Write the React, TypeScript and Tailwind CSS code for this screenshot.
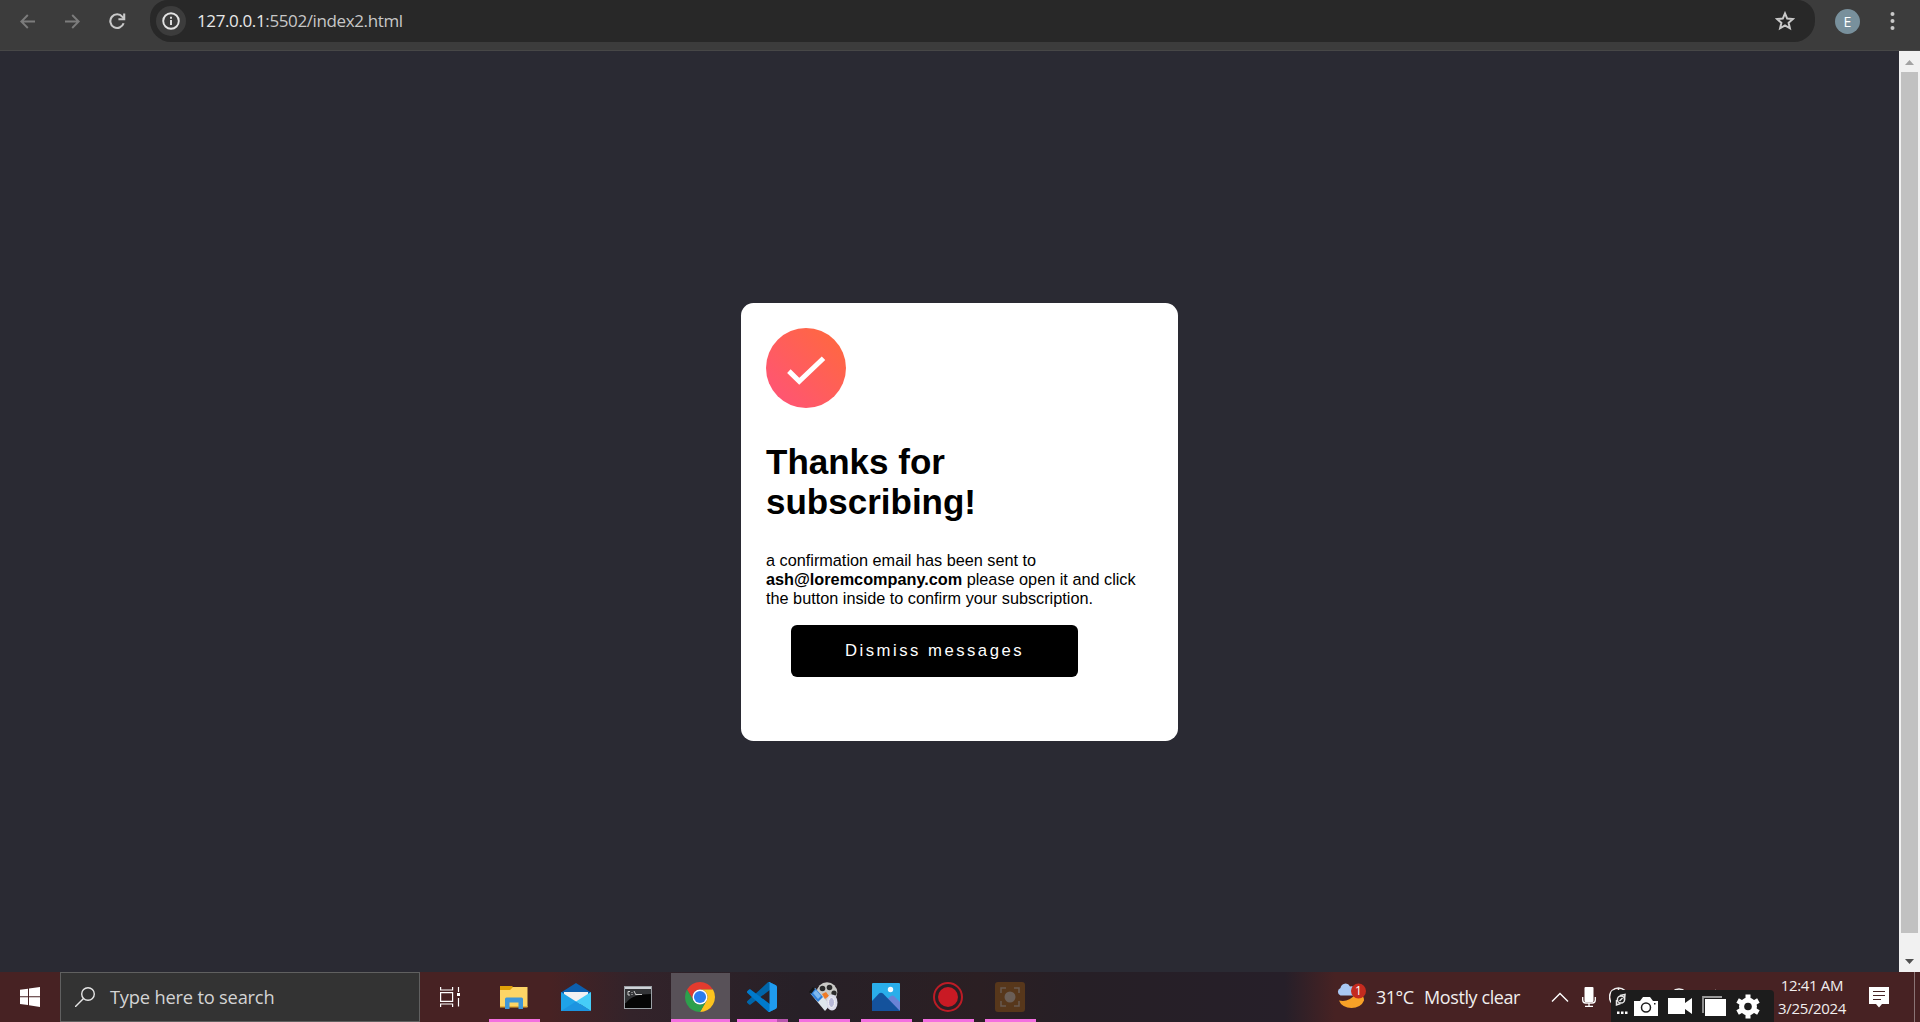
import React from "react";

const ui = "font-['Open_Sans','Noto_Sans',sans-serif]";

function BrowserBar() {
  return (
    <header className="flex h-[51px] shrink-0 items-start border-b border-[#474747] bg-[#3c3c3c]">
      <div className="flex h-[42px] w-[150px] shrink-0 items-center">
        <svg className="ml-[20px]" width="15" height="15" viewBox="0 0 15 15" fill="none" stroke="#7c7c7c" strokeWidth="1.9">
          <path d="M15 7.5H1.5M7.8 1 1.3 7.5l6.5 6.5" />
        </svg>
        <svg className="ml-[30px]" width="15" height="15" viewBox="0 0 15 15" fill="none" stroke="#7c7c7c" strokeWidth="1.9">
          <path d="M0 7.5h13.5M7.2 1l6.5 6.5L7.2 14" />
        </svg>
        <svg className="ml-[29px]" width="17" height="17" viewBox="0 0 17 17" fill="none" stroke="#c9c9c9" strokeWidth="2.1">
          <path d="M14.6 10.2A6.8 6.8 0 1 1 13.4 3.8L15 5.6" />
          <path d="M15.2 .6V6.3H9.4" />
        </svg>
      </div>
      <div className="flex h-[42px] w-[1665px] items-center rounded-b-[21px] rounded-tl-[18px] rounded-tr-[18px] bg-[#282828] pl-[6px] pr-[20px]">
        <span className="flex size-[30px] items-center justify-center rounded-full bg-[#3c3c3c]">
          <svg width="18" height="18" viewBox="0 0 18 18" fill="none" stroke="#e3e3e3" strokeWidth="1.9">
            <circle cx="9" cy="9" r="7.8" />
            <path d="M9 8v5M9 4.7v2" />
          </svg>
        </span>
        <span className={`${ui} ml-[11px] flex-1 text-[17px] leading-[42px] tracking-[-0.38px] text-[#c7c7c7]`}>
          <span className="text-[#e8e8e8]">127.0.0.1</span>:5502/index2.html
        </span>
        <svg width="20" height="20" viewBox="0 0 20 20" fill="none" stroke="#c9c9c9" strokeWidth="2">
          <path d="M10 2.400l2.200 5.200 5.700.500-4.300 3.700 1.300 5.500L10 14.400l-4.900 2.900 1.300-5.500L2.100 8.100l5.700-.500z" />
        </svg>
      </div>
      <div className="flex h-[42px] items-center">
        <span className={`${ui} ml-[20px] flex size-[25px] items-center justify-center rounded-full bg-[#78909c] text-[14px] text-white`}>E</span>
        <svg className="ml-[30px]" width="5" height="18" viewBox="0 0 5 18" fill="#c9c9c9">
          <circle cx="2.5" cy="2" r="2" />
          <circle cx="2.5" cy="9" r="2" />
          <circle cx="2.5" cy="16" r="2" />
        </svg>
      </div>
    </header>
  );
}

function SuccessCard() {
  return (
    <section className="h-[438px] w-[437px] rounded-[12.5px] bg-white p-[25px] font-['Liberation_Sans',Arial,sans-serif] text-black">
      <svg width="80" height="80" viewBox="0 0 64 64">
        <defs>
          <linearGradient id="check" x1="100%" x2="0%" y1="0%" y2="100%">
            <stop offset="0%" stopColor="#FF6A3A" />
            <stop offset="100%" stopColor="#FF527B" />
          </linearGradient>
        </defs>
        <circle cx="32" cy="32" r="32" fill="url(#check)" />
        <path d="M18.300 34.500l8.300 8.100L46 24.200" fill="none" stroke="#fff" strokeWidth="4" />
      </svg>
      <h1 className="mt-[34px] w-[260px] text-[35px] font-bold leading-[40px]">Thanks for subscribing!</h1>
      <p className="mt-[29px] whitespace-nowrap text-[16.25px] leading-[19px]">
        a confirmation email has been sent to
        <br />
        <b>ash@loremcompany.com</b> please open it and click
        <br />
        the button inside to confirm your subscription.
      </p>
      <button className="ml-[25px] mt-[17px] block h-[52px] w-[287px] rounded-[6px] bg-black text-[16.7px] tracking-[2.5px] text-white">
        Dismiss messages
      </button>
    </section>
  );
}

function Scrollbar() {
  return (
    <div className="flex w-[21px] shrink-0 flex-col items-center bg-[#f1f1f1]">
      <svg width="21" height="21" viewBox="0 0 21 21">
        <path d="M6 14l4.500-5 4.500 5z" fill="#a3a3a3" />
      </svg>
      <div className="h-[861px] w-[17px] bg-[#c1c1c1]" />
      <svg className="mt-[18px]" width="21" height="21" viewBox="0 0 21 21">
        <path d="M6 8l4.500 5 4.500-5z" fill="#505050" />
      </svg>
    </div>
  );
}

type TaskProps = { children?: React.ReactNode; open?: boolean; active?: boolean; stacked?: boolean };

function TaskButton({ children, open = true, active = false, stacked = false }: TaskProps) {
  return (
    <div className="flex w-[62px] justify-center">
      <div className={active ? "mt-px flex h-[49px] w-[59px] flex-col items-center bg-[#585158]" : "mt-px flex h-[49px] w-[51px] flex-col items-center"}>
        <div className="flex h-[46px] items-center justify-center pt-[2px]">{children}</div>
        {open && (
          <div className="flex h-[3px] w-full">
            <div className="flex-1 bg-[#f36fe0]" />
            {stacked && <div className="w-[11px] bg-[#b956ae]" />}
          </div>
        )}
      </div>
    </div>
  );
}

function Folder() {
  return (
    <svg width="28" height="24" viewBox="0 0 28 24">
      <path d="M0 1h12l2 2h13v5H0z" fill="#e0a008" />
      <path d="M0 5h10l3-3h14.500v20H0z" fill="#fdd566" />
      <path d="M0 21h27.500v1.500H0z" fill="#e8b23a" />
      <path d="M5 24V14q0-1.500 1.500-1.500h15q1.500 0 1.500 1.500v10h-4.500v-6.500h-9V24z" fill="#3f97d8" />
    </svg>
  );
}

function Mail() {
  return (
    <svg width="30" height="28" viewBox="0 0 30 28">
      <path d="M0 9.500L15 0l15 9.500V14H0z" fill="#0c5fae" />
      <path d="M3 9h24v7l-12 8L3 16z" fill="#f1f1f3" />
      <path d="M0 9l30 19H0z" fill="#1fa3e8" />
      <path d="M30 9v19L15 18.500z" fill="#46cdf8" />
      <path d="M0 28l15-9.500L30 28z" fill="#1c94e0" />
    </svg>
  );
}

function Terminal() {
  return (
    <svg width="28" height="23" viewBox="0 0 28 23">
      <rect x=".5" y=".5" width="27" height="22" fill="#050505" stroke="#9ba0a5" />
      <path d="M1 1h26v2H1z" fill="#cfd3d8" />
      <path d="M1 3h26v5Q8 8 2 17H1z" fill="#333437" />
      <path d="M6 5.500H4v3.500h2M8 6v1m0 1v1M10 5l2 4M12 8.500h6" fill="none" stroke="#ddd" strokeWidth=".9" />
    </svg>
  );
}

function Chrome() {
  return (
    <svg width="30" height="30" viewBox="0 0 48 48">
      <path d="M24 12h20.780A24 24 0 0 0 3.220 12l10.380 18A12 12 0 0 1 24 12z" fill="#e33b2e" />
      <path d="M34.400 30L24 48A24 24 0 0 0 44.780 12H24a12 12 0 0 1 10.400 18z" fill="#fcc31e" />
      <path d="M13.600 30L3.220 12A24 24 0 0 0 24 48l10.400-18A12 12 0 0 1 13.600 30z" fill="#2da04c" />
      <circle cx="24" cy="24" r="12" fill="#fff" />
      <circle cx="24" cy="24" r="9.700" fill="#2b7cee" />
    </svg>
  );
}

function Code() {
  return (
    <svg width="30" height="30" viewBox="0 0 100 100">
      <path fill="#0065A9" d="M96.460 10.800L75.860.880C73.470-.270 70.620.210 68.750 2.080L1.300 63.580c-1.800 1.660-1.800 4.500 0 6.160l5.510 5.010c1.490 1.350 3.720 1.450 5.320.230L93.360 13.360C96.090 11.300 100 13.240 100 16.660v-.240c0-2.400-1.370-4.590-3.540-5.630z" />
      <path fill="#007ACC" d="M96.460 89.200l-20.600 9.920c-2.390 1.150-5.240.660-7.110-1.210L1.300 36.420c-1.800-1.660-1.800-4.500 0-6.160l5.510-5.010c1.490-1.350 3.720-1.450 5.320-.230l81.230 61.620c2.730 2.060 6.640.120 6.640-3.300v.240c0 2.400-1.370 4.590-3.540 5.630z" />
      <path fill="#1F9CF0" d="M75.860 99.130c-2.390 1.150-5.240.660-7.110-1.210 2.310 2.300 6.250.670 6.250-2.590V4.670c0-3.260-3.940-4.890-6.250-2.590 1.870-1.870 4.720-2.360 7.110-1.210l20.600 9.910C98.620 11.830 100 14.020 100 16.420v67.160c0 2.410-1.380 4.600-3.540 5.640z" />
    </svg>
  );
}

function FilmReel() {
  return (
    <svg width="30" height="30" viewBox="0 0 30 30">
      <circle cx="18" cy="10.500" r="10.300" fill="#c9c9c6" />
      <circle cx="13.500" cy="6.500" r="2.800" fill="#2b2b2b" />
      <circle cx="20.500" cy="5.500" r="2.800" fill="#2b2b2b" />
      <circle cx="25" cy="11" r="2.600" fill="#2b2b2b" />
      <path d="M1 11l5-5 15 17-5 6z" fill="#dfe6ec" />
      <path d="M1 11l5-5 8 9-5 5z" fill="#2f7fd8" />
      <path d="M4 11l3-3 5 6-3 3z" fill="#7db7ee" />
      <path d="M0 10l4-5 2 2-4 5z" fill="#151515" />
      <path d="M13 12l4-2 3 4-4 3z" fill="#f07a24" />
      <ellipse cx="23" cy="20.500" rx="5.500" ry="8" fill="#dcdcec" />
      <ellipse cx="22.500" cy="20.500" rx="3" ry="5" fill="#b8b8d8" stroke="#f4f4f4" />
    </svg>
  );
}

function Photos() {
  return (
    <svg width="28" height="28" viewBox="0 0 28 28">
      <rect width="28" height="28" rx="1" fill="#2aaeea" />
      <path d="M14 17l5-4q1.500-1 3 0l6 6v8l-8 1z" fill="#6a83d6" />
      <path d="M0 18l7-7.500q2-1.500 4 0L28 28H0z" fill="#14529c" />
      <circle cx="18.500" cy="6.500" r="2.700" fill="#f5fafd" />
    </svg>
  );
}

function Weather() {
  return (
    <svg width="31" height="29" viewBox="0 0 31 29">
      <path d="M3 17.500c6 1.500 12-.500 16-6 6-1 9.500 2 9 6a13 10.500 0 0 1-25 0z" fill="#f7a127" />
      <path d="M4.500 12.500a4 4 0 0 1 0-7.500A5 5 0 0 1 14 3.500a4.500 4.500 0 0 1 3 9z" fill="#a9c8f3" />
      <circle cx="22.500" cy="8" r="7.500" fill="#c42b1f" />
      <text x="22.500" y="12.400" textAnchor="middle" fontFamily="Open Sans" fontSize="12" fill="#fff">1</text>
    </svg>
  );
}

function CaptureBar() {
  return (
    <div className="absolute left-[1611px] top-[18px] flex h-[32px] w-[163px] rounded-t-[4px] bg-[#1c1c1c]">
      <svg width="163" height="32" viewBox="0 0 163 32" fill="#fff">
        <g fill="none" stroke="#e8e8e8" strokeWidth="1.500">
          <circle cx="10" cy="9.500" r="3.600" />
          <path d="M9 5.500l5-1-.500 5M5.500 10v5l4-1.500M8.500 11l3-3" />
        </g>
        <path d="M6 21.500h2.500V24H6zM10 21.500h2.500V24H10zM14 21.500h2.500V24H14z" />
        <path d="M23 11h6l3-4h7l3 4h5v15H23z" />
        <circle cx="35" cy="17.500" r="4.500" fill="none" stroke="#1c1c1c" strokeWidth="1.500" />
        <path d="M43 13h1.500v1.500H43z" fill="#1c1c1c" />
        <path d="M57 8h17v5l7-5v16l-7-5v5H57z" />
        <path d="M92 23V7h19" fill="none" stroke="#9a9a9a" strokeWidth="1.800" />
        <path d="M94 9h21v17H94z" />
        <g transform="translate(137 16.500)">
          <path fill="none" stroke="#fff" strokeWidth="5" d="M0-12V12M-10.400-6L10.400 6M-10.400 6L10.400-6" />
          <circle r="9" />
          <circle r="3.800" fill="#1c1c1c" />
        </g>
      </svg>
    </div>
  );
}

function Taskbar() {
  return (
    <footer className={`${ui} relative flex h-[50px] shrink-0 overflow-hidden bg-[linear-gradient(90deg,#472223_0px,#472223_550px,#33232a_630px,#272027_800px,#2b1f23_980px,#261f26_1080px,#261f29_1285px,#472223_1335px,#472223_1920px)] text-[#f1eeee]`}>
      <div className="flex w-[60px] items-center justify-center">
        <svg width="20" height="20" viewBox="0 0 20 20" fill="#fff">
          <path d="M0 2.800L8 1.700V9.300H0zM9 1.500L20 0v9.300H9zM0 10.300h8v7.800L0 17zM9 10.300h11V20L9 18.300z" />
        </svg>
      </div>
      <div className="flex w-[360px] items-center border border-[#606060] bg-[#333333]">
        <svg className="ml-[14px]" width="20" height="20" viewBox="0 0 20 20" fill="none" stroke="#e6e6e6" strokeWidth="1.400">
          <circle cx="13" cy="7" r="6.300" />
          <path d="M8.500 11.500L0 20" />
        </svg>
        <span className="ml-[15px] whitespace-nowrap text-[18.300px] tracking-[-0.2px] text-[#d4d4d4]">Type here to search</span>
      </div>
      <div className="flex w-[63px] items-center pl-[20px]">
        <svg width="20" height="20" viewBox="0 0 20 20" fill="none" stroke="#fff" strokeWidth="1.200">
          <path d="M.6 0v3h12V0M.6 5.600h12v8.800H.6zM.6 20v-3h12v3M18.500 0v5M18.500 11v8.500" />
          <path d="M17 6h3v3h-3z" fill="#fff" stroke="none" />
        </svg>
      </div>
      <TaskButton><Folder /></TaskButton>
      <TaskButton open={false}><Mail /></TaskButton>
      <TaskButton open={false}><Terminal /></TaskButton>
      <TaskButton active><Chrome /></TaskButton>
      <TaskButton stacked><Code /></TaskButton>
      <TaskButton><FilmReel /></TaskButton>
      <TaskButton><Photos /></TaskButton>
      <TaskButton>
        <svg width="30" height="30" viewBox="0 0 30 30">
          <circle cx="15" cy="15" r="14" fill="none" stroke="#bd1c26" strokeWidth="2" />
          <circle cx="15" cy="15" r="10" fill="#c91a24" />
        </svg>
      </TaskButton>
      <TaskButton>
        <svg width="30" height="30" viewBox="0 0 30 30" fill="none" stroke="#685a50" strokeWidth="1.500">
          <rect width="30" height="30" rx="3" fill="#57371b" stroke="none" />
          <path d="M6 11V6h5M19 6h5v5M24 19v5h-5M11 24H6v-5" />
          <circle cx="15" cy="15" r="5.500" fill="#6a5e57" stroke="none" />
        </svg>
      </TaskButton>
      <div className="ml-[295px] flex items-center">
        <Weather />
        <span className="ml-[9px] w-[48px] whitespace-nowrap text-[18px] tracking-[-0.5px]">31°C</span>
        <span className="w-[127px] whitespace-nowrap text-[18px] tracking-[-0.4px]">Mostly clear</span>
        <svg width="18" height="10" viewBox="0 0 18 10" fill="none" stroke="#fff" strokeWidth="1.400">
          <path d="M1 9.500l8-8 8 8" />
        </svg>
        <svg className="ml-[13px]" width="14" height="20" viewBox="0 0 14 20" fill="none" stroke="#fff" strokeWidth="1.300">
          <rect x="2.500" y="0" width="9" height="15" rx="1" fill="#fff" stroke="none" />
          <path d="M.7 10v3q0 3 3 3h6.600q3 0 3-3v-3M7 16v3M3 19.300h8" />
        </svg>
        <svg className="ml-[13px]" width="115" height="20" viewBox="0 0 115 20" fill="none" stroke="#eee" strokeWidth="1.500">
          <circle cx="9.500" cy="10" r="9" />
          <path d="M9.500 1v6M4 7V3M63 5q7-6 14 0M106 3l2 2" />
        </svg>
      </div>
      <div className="ml-auto flex h-full">
        <div className="flex w-[90px] flex-col items-center whitespace-nowrap text-[15px] leading-[23px] tracking-[-0.35px]">
          <span className="mt-[2px]">12:41 AM</span>
          <span>3/25/2024</span>
        </div>
        <svg className="ml-[12px] mt-[15px]" width="20" height="21" viewBox="0 0 20 21">
          <path d="M0 0h20v17h-7l-3 3.500L7 17H0z" fill="#fff" />
          <path d="M4 4.500h12M4 8.500h12M4 12.500h8" stroke="#472223" strokeWidth="1.200" />
        </svg>
        <div className="ml-[25px] mr-[5px] h-full w-px bg-[#8a7475]" />
      </div>
      <CaptureBar />
    </footer>
  );
}

export default function App() {
  return (
    <div className="flex h-[1022px] w-[1920px] flex-col overflow-hidden bg-[#2a2a33]">
      <BrowserBar />
      <div className="flex h-[921px] shrink-0">
        <main className="flex flex-1 items-start justify-center pl-[20px] pt-[252px]">
          <SuccessCard />
        </main>
        <Scrollbar />
      </div>
      <Taskbar />
    </div>
  );
}
